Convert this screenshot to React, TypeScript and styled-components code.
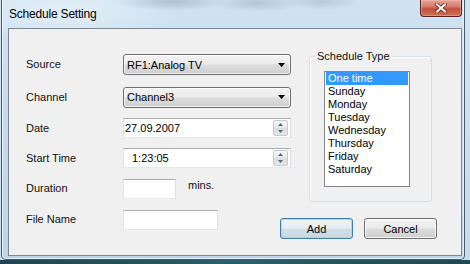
import React from "react";
import styled, { createGlobalStyle } from "styled-components";

const GlobalStyle = createGlobalStyle`
  html, body { margin: 0; padding: 0; }
  body {
    width: 470px;
    height: 264px;
    overflow: hidden;
    font-family: "Liberation Sans", Arial, sans-serif;
    font-size: 11px;
    color: #111;
  }
  #root { width: 470px; height: 264px; }
`;

const Desktop = styled.div`
  width: 470px;
  height: 264px;
  display: flex;
  flex-direction: column;
  background: linear-gradient(180deg, #d3e4f1 0%, #c7dcec 100%);
`;

const DesktopStrip = styled.div`
  flex: 1;
  background: linear-gradient(90deg, #1c4552 0%, #27606c 50%, #1d4855 100%);
`;

const Window = styled.div`
  box-sizing: border-box;
  width: 464px;
  height: 260px;
  margin-left: 1px;
  display: flex;
  flex-direction: column;
  padding: 0 2px 3px 6px;
  border: 1px solid #4d5b69;
  border-top: none;
  border-radius: 0 0 5px 5px;
  background:
    radial-gradient(ellipse 55px 9px at 170px 2px, rgba(110, 130, 150, 0.35), transparent),
    radial-gradient(ellipse 45px 9px at 255px 3px, rgba(110, 130, 150, 0.3), transparent),
    radial-gradient(ellipse 40px 8px at 320px 2px, rgba(110, 130, 150, 0.25), transparent),
    radial-gradient(ellipse 120px 30px at 60px 12px, rgba(255, 255, 255, 0.45), transparent),
    linear-gradient(180deg, #cfe3f2 0%, #c5dbed 45%, #bdd5e9 100%);
  box-shadow:
    inset 1px 0 0 rgba(255, 255, 255, 0.6),
    inset -1px 0 0 rgba(255, 255, 255, 0.6),
    inset 0 -1px 0 rgba(255, 255, 255, 0.6);
`;

const TitleBar = styled.div`
  height: 28px;
  flex: none;
  display: flex;
  justify-content: space-between;
  align-items: flex-start;
`;

const Title = styled.div`
  margin: 7px 0 0 1px;
  font-size: 12px;
  line-height: 14px;
  letter-spacing: -0.2px;
  color: #000;
`;

const CloseButton = styled.div`
  box-sizing: border-box;
  width: 42px;
  height: 17px;
  display: flex;
  align-items: center;
  justify-content: center;
  border: 1px solid #5e2119;
  border-top: none;
  border-radius: 0 0 4px 4px;
  background: linear-gradient(180deg, #e3a396 0%, #d2806f 40%, #c24f3b 55%, #cf6f58 100%);
  box-shadow: inset 0 0 0 1px rgba(255, 210, 200, 0.35);
`;

const Client = styled.div`
  flex: 1;
  display: grid;
  grid-template-columns: 254px 11px 18px 123px 5px;
  grid-template-rows: auto 1fr;
  align-content: start;
  padding-left: 17px;
  border: 1px solid #7c8995;
  background: #f0f0f0;
`;

const Form = styled.div`
  grid-column: 1 / 3;
  grid-row: 1 / 3;
  margin-top: 19px;
  display: grid;
  grid-template-columns: 97px 168px;
  grid-template-rows: 33px 32px 30px 30px 31px 31px;
  align-items: center;
`;

const Label = styled.div`
  font-size: 11px;
  line-height: 13px;
  color: #111;
`;

const Combo = styled.div`
  box-sizing: border-box;
  width: 168px;
  height: 21px;
  display: flex;
  align-items: center;
  justify-content: space-between;
  padding: 0 5px 0 3px;
  border: 1px solid #707070;
  border-radius: 3px;
  background: linear-gradient(180deg, #f3f3f3 0%, #ebebeb 48%, #dddddd 52%, #cfcfcf 100%);
  box-shadow: inset 0 0 0 1px rgba(255, 255, 255, 0.7);
  font-size: 11px;
  color: #000;
`;

const Field = styled.div<{ $width: number; $pad?: number }>`
  box-sizing: border-box;
  width: ${(p) => p.$width}px;
  height: 20px;
  display: flex;
  align-items: center;
  justify-content: space-between;
  padding: 0 2px 0 ${(p) => p.$pad ?? 2}px;
  border: 1px solid;
  border-color: #abadb3 #dbdfe6 #e3e9ef #e2e3ea;
  background: #fff;
  font-size: 11px;
  color: #000;
`;

const FieldWithUnit = styled.div`
  display: flex;
  align-items: flex-start;
  gap: 12px;
  height: 20px;
`;

const Unit = styled.span`
  font-size: 11px;
  line-height: 13px;
  color: #111;
`;

const Spin = styled.div`
  box-sizing: border-box;
  width: 15px;
  height: 16px;
  display: flex;
  flex-direction: column;
  border: 1px solid #c4cad2;
  border-radius: 2px;
  background: linear-gradient(180deg, #f6f6f6 0%, #e9e9e9 48%, #dcdcdc 52%, #e6e6e6 100%);
`;

const SpinHalf = styled.div`
  flex: 1;
  display: flex;
  align-items: center;
  justify-content: center;
`;

const GroupBox = styled.div`
  grid-column: 4;
  grid-row: 1;
  position: relative;
  box-sizing: border-box;
  height: 146px;
  margin-top: 27px;
  border: 1px solid #d5dfe5;
  border-radius: 3px;
  box-shadow: inset 1px 1px 0 #fff;
`;

const Legend = styled.span`
  position: absolute;
  top: -7px;
  left: 5px;
  padding: 0 2px;
  background: #f0f0f0;
  font-size: 11px;
  line-height: 13px;
  color: #111;
`;

const ListBox = styled.div`
  box-sizing: border-box;
  width: 86px;
  height: 116px;
  margin: 14px 0 0 14px;
  padding: 0 1px;
  border: 1px solid #828790;
  background: #fff;
  overflow: hidden;
`;

const ListItem = styled.div<{ $selected?: boolean }>`
  height: 13px;
  line-height: 13px;
  padding-left: 2px;
  font-size: 11px;
  color: ${(p) => (p.$selected ? "#fff" : "#000")};
  background: ${(p) => (p.$selected ? "#3399ff" : "transparent")};
`;

const ButtonRow = styled.div`
  grid-column: 2 / 6;
  grid-row: 2;
  align-self: start;
  margin-top: 16px;
  display: flex;
  gap: 11px;
`;

const Button = styled.div<{ $default?: boolean }>`
  box-sizing: border-box;
  width: 73px;
  height: 21px;
  display: flex;
  align-items: center;
  justify-content: center;
  border: 1px solid ${(p) => (p.$default ? "#3c7fb1" : "#707070")};
  border-radius: 3px;
  background: ${(p) =>
    p.$default
      ? "linear-gradient(180deg, #eef4f8 0%, #e6edf2 48%, #d6dfe6 52%, #cbd6de 100%)"
      : "linear-gradient(180deg, #f3f3f3 0%, #ebebeb 48%, #dddddd 52%, #cfcfcf 100%)"};
  box-shadow: inset 0 0 0 1px
    ${(p) => (p.$default ? "rgba(160, 215, 245, 0.9)" : "rgba(255, 255, 255, 0.75)")};
  font-size: 11px;
  color: #000;
`;

const ComboArrow = () => (
  <svg width="7" height="4" viewBox="0 0 7 4">
    <polygon points="0,0 7,0 3.5,4" fill="#000" />
  </svg>
);

const SpinArrow = ({ up }: { up?: boolean }) => (
  <svg width="5" height="3" viewBox="0 0 5 3">
    <polygon points={up ? "0,3 5,3 2.5,0" : "0,0 5,0 2.5,3"} fill="#56677f" />
  </svg>
);

const SpinButtons = () => (
  <Spin>
    <SpinHalf>
      <SpinArrow up />
    </SpinHalf>
    <SpinHalf>
      <SpinArrow />
    </SpinHalf>
  </Spin>
);

const CloseGlyph = () => (
  <svg width="12" height="10" viewBox="0 0 12 10">
    <path d="M2 1.5 L10 8.5 M10 1.5 L2 8.5" stroke="#6a1e14" strokeWidth="3.6" strokeLinecap="square" />
    <path d="M2 1.5 L10 8.5 M10 1.5 L2 8.5" stroke="#fff" strokeWidth="2" strokeLinecap="square" />
  </svg>
);

const days = ["One time", "Sunday", "Monday", "Tuesday", "Wednesday", "Thursday", "Friday", "Saturday"];

export default function App() {
  return (
    <>
      <GlobalStyle />
      <Desktop>
        <Window>
          <TitleBar>
            <Title>Schedule Setting</Title>
            <CloseButton>
              <CloseGlyph />
            </CloseButton>
          </TitleBar>
          <Client>
            <Form>
              <Label>Source</Label>
              <Combo>
                <span>RF1:Analog TV</span>
                <ComboArrow />
              </Combo>
              <Label>Channel</Label>
              <Combo>
                <span>Channel3</span>
                <ComboArrow />
              </Combo>
              <Label>Date</Label>
              <Field $width={168} $pad={1}>
                <span>27.09.2007</span>
                <SpinButtons />
              </Field>
              <Label>Start Time</Label>
              <Field $width={168} $pad={8}>
                <span>1:23:05</span>
                <SpinButtons />
              </Field>
              <Label>Duration</Label>
              <FieldWithUnit>
                <Field $width={53} />
                <Unit>mins.</Unit>
              </FieldWithUnit>
              <Label>File Name</Label>
              <Field $width={95} />
            </Form>
            <GroupBox>
              <Legend>Schedule Type</Legend>
              <ListBox>
                {days.map((d, i) => (
                  <ListItem key={d} $selected={i === 0}>
                    {d}
                  </ListItem>
                ))}
              </ListBox>
            </GroupBox>
            <ButtonRow>
              <Button $default>Add</Button>
              <Button>Cancel</Button>
            </ButtonRow>
          </Client>
        </Window>
        <DesktopStrip />
      </Desktop>
    </>
  );
}
